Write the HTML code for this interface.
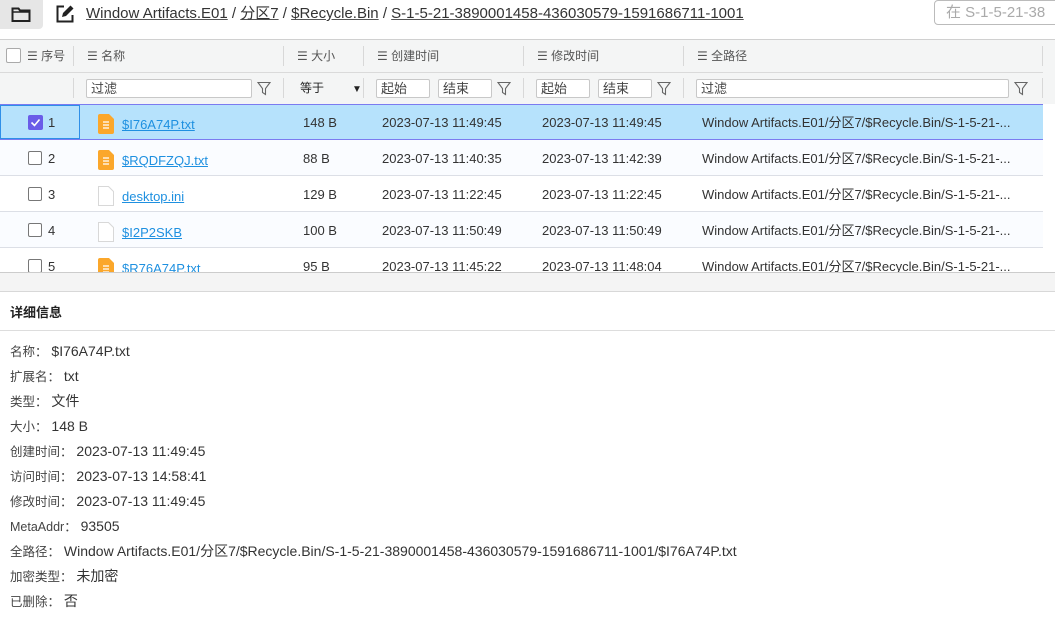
<!DOCTYPE html><html><head><meta charset="utf-8"><style>
*{margin:0;padding:0;box-sizing:border-box}
body{width:1055px;height:641px;overflow:hidden;background:#fff;font-family:"Liberation Sans","Noto Sans CJK SC",sans-serif;color:#333;position:relative;font-size:13px}
.a{position:absolute;white-space:nowrap;line-height:17px}
.u{text-decoration:underline;text-decoration-color:#555}
.hd{color:#555;font-size:12px}
.inp{position:absolute;height:19px;border:1px solid #c8c8c8;border-radius:2px;background:#fff;font-size:13px;padding-left:4px;line-height:17px;color:#444}
.row{position:absolute;left:0;width:1043px;height:36px;border-bottom:1px solid #dcdfe6}
.cb{position:absolute;width:14px;height:14px;border:1.5px solid #777;border-radius:2px;background:#fff}
.ic{position:absolute;width:16px;height:20px}
.lk{color:#1e90e0;text-decoration:underline}
.sep{position:absolute;width:1px;background:#d8d8d8}
.dl{position:absolute;left:10px;font-size:14px;color:#333;line-height:18px;white-space:nowrap}
.dl b{font-weight:normal;font-size:12.5px;color:#444}
</style></head><body>
<div class="a" style="left:0;top:0;width:43px;height:29px;background:#e6e6e6;border-radius:0 0 4px 0"></div>
<svg class="a" style="left:11px;top:6px" width="20" height="17" viewBox="0 0 20 17"><path d="M1.5 2.5h6l1.5 2h9.5v10.5h-17z" fill="none" stroke="#222" stroke-width="2"/><path d="M1.5 6h17" stroke="#222" stroke-width="1.5"/></svg>
<svg class="a" style="left:55px;top:4px" width="20" height="20" viewBox="0 0 20 20"><path d="M9 2.5H2.5v15h15V11" fill="none" stroke="#222" stroke-width="2"/><path d="M7 13l1-4 7.5-7.5 3 3L11 12z" fill="#222"/></svg>
<div class="a" style="left:86px;top:5px;font-size:15px;color:#333;line-height:18px"><span class="u">Window Artifacts.E01</span> / <span class="u">分区7</span> / <span class="u">$Recycle.Bin</span> / <span class="u">S-1-5-21-3890001458-436030579-1591686711-1001</span></div>
<div class="a" style="left:934px;top:0;width:130px;height:25px;border:1px solid #bbb;border-radius:4px;color:#aaa;font-size:15px;padding:2px 0 0 11px;line-height:19px">在 S-1-5-21-38</div>
<div class="a" style="left:0;top:39px;width:1055px;height:65px;background:#f4f5f5;border-top:1px solid #d0d0d0"></div>
<div class="a" style="left:0;top:72px;width:1043px;height:1px;background:#dadada"></div>
<div class="cb" style="left:6px;top:48px;border-color:#aaa;border-width:1px;width:15px;height:15px"></div>
<div class="a hd" style="left:27px;top:48px">☰ 序号</div>
<div class="a hd" style="left:87px;top:48px">☰ 名称</div>
<div class="a hd" style="left:297px;top:48px">☰ 大小</div>
<div class="a hd" style="left:377px;top:48px">☰ 创建时间</div>
<div class="a hd" style="left:537px;top:48px">☰ 修改时间</div>
<div class="a hd" style="left:697px;top:48px">☰ 全路径</div>
<div class="sep" style="left:73px;top:46px;height:20px"></div><div class="sep" style="left:73px;top:78px;height:20px"></div>
<div class="sep" style="left:283px;top:46px;height:20px"></div><div class="sep" style="left:283px;top:78px;height:20px"></div>
<div class="sep" style="left:363px;top:46px;height:20px"></div><div class="sep" style="left:363px;top:78px;height:20px"></div>
<div class="sep" style="left:523px;top:46px;height:20px"></div><div class="sep" style="left:523px;top:78px;height:20px"></div>
<div class="sep" style="left:683px;top:46px;height:20px"></div><div class="sep" style="left:683px;top:78px;height:20px"></div>
<div class="sep" style="left:1042px;top:46px;height:20px"></div><div class="sep" style="left:1042px;top:78px;height:20px"></div>
<div class="inp" style="left:86px;top:79px;width:166px">过滤</div>
<div class="inp" style="left:376px;top:79px;width:54px">起始</div>
<div class="inp" style="left:438px;top:79px;width:54px">结束</div>
<div class="inp" style="left:536px;top:79px;width:54px">起始</div>
<div class="inp" style="left:598px;top:79px;width:54px">结束</div>
<div class="inp" style="left:696px;top:79px;width:313px">过滤</div>
<div class="a" style="left:300px;top:80px;font-size:12px;color:#222">等于</div>
<div class="a" style="left:352px;top:81px;font-size:10px;color:#222">▼</div>
<svg class="a" style="left:257px;top:81px" width="14" height="15" viewBox="0 0 14 15"><path d="M1 1.5h12L8.5 7.5v6l-3-2v-4z" fill="none" stroke="#666" stroke-width="1.1"/></svg>
<svg class="a" style="left:497px;top:81px" width="14" height="15" viewBox="0 0 14 15"><path d="M1 1.5h12L8.5 7.5v6l-3-2v-4z" fill="none" stroke="#666" stroke-width="1.1"/></svg>
<svg class="a" style="left:657px;top:81px" width="14" height="15" viewBox="0 0 14 15"><path d="M1 1.5h12L8.5 7.5v6l-3-2v-4z" fill="none" stroke="#666" stroke-width="1.1"/></svg>
<svg class="a" style="left:1014px;top:81px" width="14" height="15" viewBox="0 0 14 15"><path d="M1 1.5h12L8.5 7.5v6l-3-2v-4z" fill="none" stroke="#666" stroke-width="1.1"/></svg>
<div class="row" style="top:104px;background:#b6e2fc;border-top:1px solid #7b7bf0;border-bottom:1px solid #7b7bf0"></div>
<div class="a" style="left:0;top:105px;width:80px;height:34px;border:1.5px solid #2f8fe8"></div>
<div class="row" style="top:140px;background:#fafcff"></div>
<div class="row" style="top:176px"></div>
<div class="row" style="top:212px;background:#fafcff"></div>
<div class="row" style="top:248px;height:24px;border:none"></div>
<div class="a" style="left:28px;top:115px;width:15px;height:15px;background:#6a5ce8;border-radius:2px"></div>
<svg class="a" style="left:30px;top:117px" width="11" height="11" viewBox="0 0 11 11"><path d="M1.5 5.5l3 3 5-6" fill="none" stroke="#fff" stroke-width="1.6"/></svg>
<div class="cb" style="left:28px;top:151px"></div>
<div class="cb" style="left:28px;top:187px"></div>
<div class="cb" style="left:28px;top:223px"></div>
<div class="cb" style="left:28px;top:259px"></div>
<div style="position:absolute;left:0;top:104px;width:1043px;height:168px;overflow:hidden">
<div class="a" style="left:48px;top:10px">1</div>
<div class="a" style="left:48px;top:46px">2</div>
<div class="a" style="left:48px;top:82px">3</div>
<div class="a" style="left:48px;top:118px">4</div>
<div class="a" style="left:48px;top:154px">5</div>
<svg class="ic" style="left:98px;top:10px" viewBox="0 0 16 20"><path d="M2 0h9l5 5v13a2 2 0 0 1-2 2H2a2 2 0 0 1-2-2V2a2 2 0 0 1 2-2z" fill="#fba72b"/><path d="M5 8h6M5 11h6M5 14h6" stroke="#fff" stroke-width="1.2"/></svg>
<svg class="ic" style="left:98px;top:46px" viewBox="0 0 16 20"><path d="M2 0h9l5 5v13a2 2 0 0 1-2 2H2a2 2 0 0 1-2-2V2a2 2 0 0 1 2-2z" fill="#fba72b"/><path d="M5 8h6M5 11h6M5 14h6" stroke="#fff" stroke-width="1.2"/></svg>
<svg class="ic" style="left:98px;top:82px" viewBox="0 0 16 20"><path d="M.5.5h10l5 5v14H.5z" fill="#fff" stroke="#d8d8d8"/></svg>
<svg class="ic" style="left:98px;top:118px" viewBox="0 0 16 20"><path d="M.5.5h10l5 5v14H.5z" fill="#fff" stroke="#d8d8d8"/></svg>
<svg class="ic" style="left:98px;top:154px" viewBox="0 0 16 20"><path d="M2 0h9l5 5v13a2 2 0 0 1-2 2H2a2 2 0 0 1-2-2V2a2 2 0 0 1 2-2z" fill="#fba72b"/><path d="M5 8h6M5 11h6M5 14h6" stroke="#fff" stroke-width="1.2"/></svg>
<div class="a lk" style="left:122px;top:12px">$I76A74P.txt</div>
<div class="a lk" style="left:122px;top:48px">$RQDFZQJ.txt</div>
<div class="a lk" style="left:122px;top:84px">desktop.ini</div>
<div class="a lk" style="left:122px;top:120px">$I2P2SKB</div>
<div class="a lk" style="left:122px;top:156px">$R76A74P.txt</div>
<div class="a" style="left:303px;top:10px">148 B</div><div class="a" style="left:382px;top:10px">2023-07-13 11:49:45</div><div class="a" style="left:542px;top:10px">2023-07-13 11:49:45</div><div class="a" style="left:702px;top:10px">Window Artifacts.E01/分区7/$Recycle.Bin/S-1-5-21-...</div>
<div class="a" style="left:303px;top:46px">88 B</div><div class="a" style="left:382px;top:46px">2023-07-13 11:40:35</div><div class="a" style="left:542px;top:46px">2023-07-13 11:42:39</div><div class="a" style="left:702px;top:46px">Window Artifacts.E01/分区7/$Recycle.Bin/S-1-5-21-...</div>
<div class="a" style="left:303px;top:82px">129 B</div><div class="a" style="left:382px;top:82px">2023-07-13 11:22:45</div><div class="a" style="left:542px;top:82px">2023-07-13 11:22:45</div><div class="a" style="left:702px;top:82px">Window Artifacts.E01/分区7/$Recycle.Bin/S-1-5-21-...</div>
<div class="a" style="left:303px;top:118px">100 B</div><div class="a" style="left:382px;top:118px">2023-07-13 11:50:49</div><div class="a" style="left:542px;top:118px">2023-07-13 11:50:49</div><div class="a" style="left:702px;top:118px">Window Artifacts.E01/分区7/$Recycle.Bin/S-1-5-21-...</div>
<div class="a" style="left:303px;top:154px">95 B</div><div class="a" style="left:382px;top:154px">2023-07-13 11:45:22</div><div class="a" style="left:542px;top:154px">2023-07-13 11:48:04</div><div class="a" style="left:702px;top:154px">Window Artifacts.E01/分区7/$Recycle.Bin/S-1-5-21-...</div>
</div>
<div class="a" style="left:0;top:272px;width:1055px;height:20px;background:#f4f4f4;border-top:1px solid #ccc;border-bottom:1px solid #d8d8d8"></div>
<div class="a" style="left:10px;top:304px;font-size:13px;font-weight:bold;color:#222">详细信息</div>
<div class="a" style="left:0;top:330px;width:1055px;height:1px;background:#ddd"></div>
<div class="dl" style="top:342px"><b>名称：</b> $I76A74P.txt</div>
<div class="dl" style="top:367px"><b>扩展名：</b> txt</div>
<div class="dl" style="top:392px"><b>类型：</b> 文件</div>
<div class="dl" style="top:417px"><b>大小：</b> 148 B</div>
<div class="dl" style="top:442px"><b>创建时间：</b> 2023-07-13 11:49:45</div>
<div class="dl" style="top:467px"><b>访问时间：</b> 2023-07-13 14:58:41</div>
<div class="dl" style="top:492px"><b>修改时间：</b> 2023-07-13 11:49:45</div>
<div class="dl" style="top:517px"><b>MetaAddr：</b> 93505</div>
<div class="dl" style="top:542px"><b>全路径：</b> Window Artifacts.E01/分区7/$Recycle.Bin/S-1-5-21-3890001458-436030579-1591686711-1001/$I76A74P.txt</div>
<div class="dl" style="top:567px"><b>加密类型：</b> 未加密</div>
<div class="dl" style="top:592px"><b>已删除：</b> 否</div>
</body></html>
